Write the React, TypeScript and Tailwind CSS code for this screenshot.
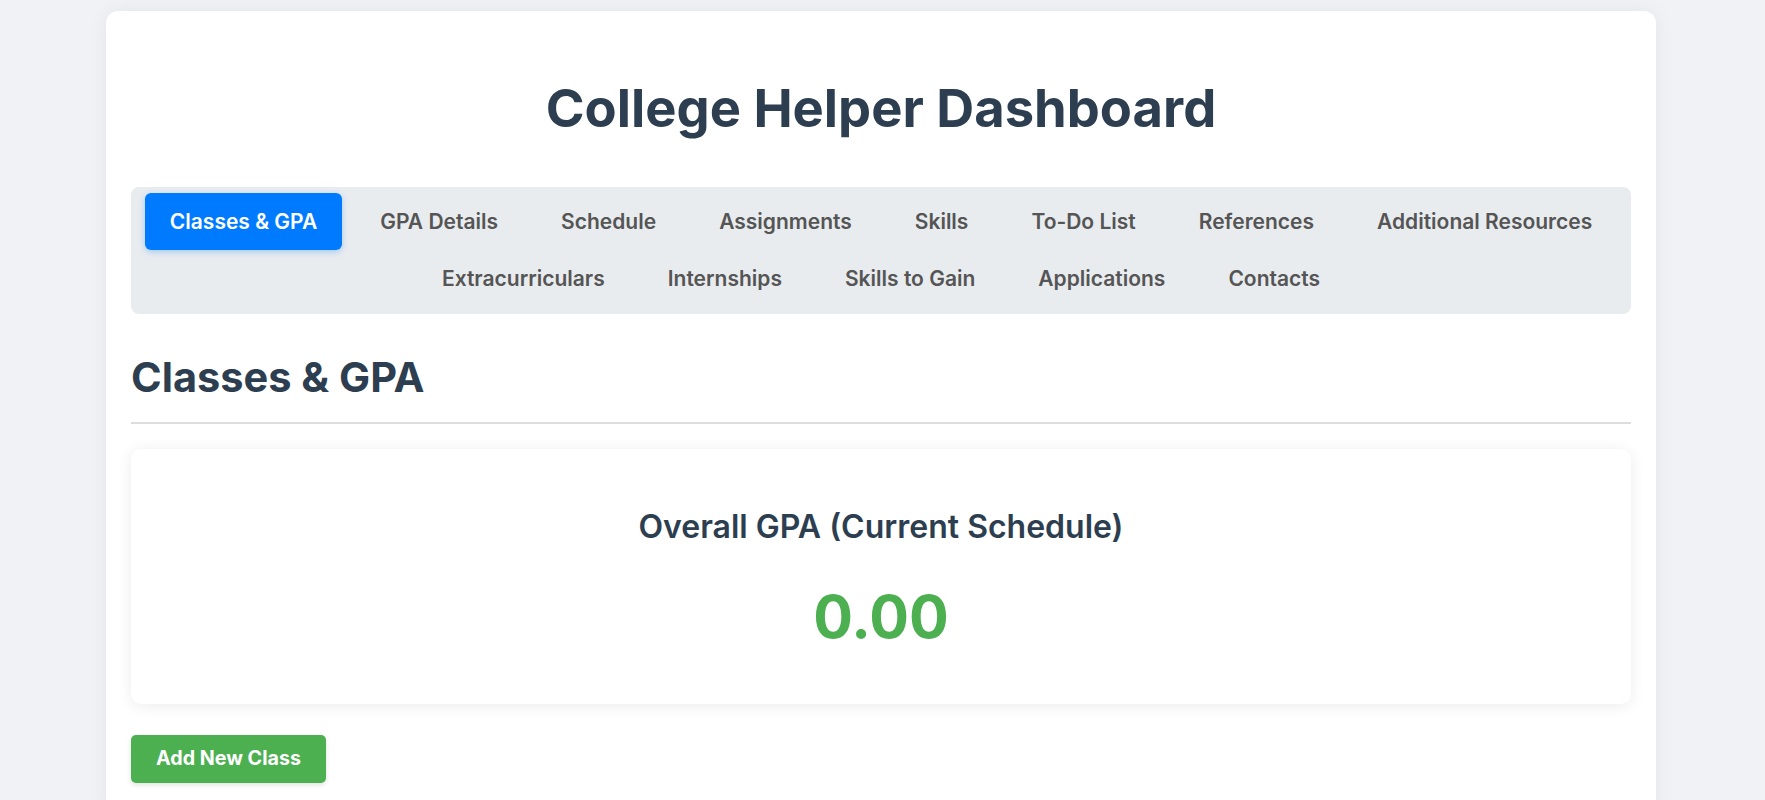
import React, { useState } from 'react';

const TABS_ROW_1 = [
  'Classes & GPA',
  'GPA Details',
  'Schedule',
  'Assignments',
  'Skills',
  'To-Do List',
  'References',
  'Additional Resources',
];

const TABS_ROW_2 = ['Extracurriculars', 'Internships', 'Skills to Gain', 'Applications', 'Contacts'];

function TabButton({ label, active, onClick }: { label: string; active: boolean; onClick: () => void }) {
  return (
    <button
      onClick={onClick}
      className={`h-[57px] px-[25px] rounded-md text-[21px] font-semibold whitespace-nowrap ${
        active ? 'bg-[#007bff] text-white shadow-[0_2px_6px_rgba(0,123,255,0.3)]' : 'text-[#555555]'
      }`}
    >
      {label}
    </button>
  );
}

export default function App() {
  const [activeTab, setActiveTab] = useState('Classes & GPA');
  const gpa = 0;

  return (
    <div className="min-h-screen bg-[#f0f2f5] pt-[11px] font-['Inter','Noto_Sans',sans-serif]">
      <div className="w-[1550px] ml-[106px] bg-white rounded-xl shadow-[0_0_20px_rgba(0,0,0,0.06)] px-[25px] pb-[40px]">
        {/* Title */}
        <h1 className="pt-[67px] mb-[49px] text-center text-[52.5px] leading-[60px] font-bold text-[#2c3e50]">
          College Helper Dashboard
        </h1>

        {/* Tabs */}
        <nav className="bg-[#e9ecef] rounded-lg px-[12px] pt-[6px] pb-[7px] flex flex-col">
          <div className="flex justify-center gap-x-[13px]">
            {TABS_ROW_1.map((t) => (
              <TabButton key={t} label={t} active={activeTab === t} onClick={() => setActiveTab(t)} />
            ))}
          </div>
          <div className="flex justify-center gap-x-[13px]">
            {TABS_ROW_2.map((t) => (
              <TabButton key={t} label={t} active={activeTab === t} onClick={() => setActiveTab(t)} />
            ))}
          </div>
        </nav>

        {/* Section */}
        <h2 className="mt-[38px] pb-[20px] border-b-2 border-[#dddddd] text-[41.5px] leading-[50px] font-bold text-[#2c3e50]">
          Classes &amp; GPA
        </h2>

        <div className="mt-[25px] bg-white rounded-[10px] shadow-[0_2px_15px_rgba(0,0,0,0.08)] pt-[60px] pb-[51px] flex flex-col items-center">
          <h3 className="text-[32px] leading-[36px] font-semibold text-[#2c3e50]">Overall GPA (Current Schedule)</h3>
          <div className="mt-[36px] text-[59px] leading-[72px] font-bold text-[#4caf50]">{gpa.toFixed(2)}</div>
        </div>

        <button className="mt-[31px] h-[48px] px-[25px] rounded-[5px] bg-[#4caf50] text-white text-[19.7px] font-bold shadow-[0_2px_5px_rgba(0,0,0,0.12)]">
          Add New Class
        </button>
      </div>
    </div>
  );
}
